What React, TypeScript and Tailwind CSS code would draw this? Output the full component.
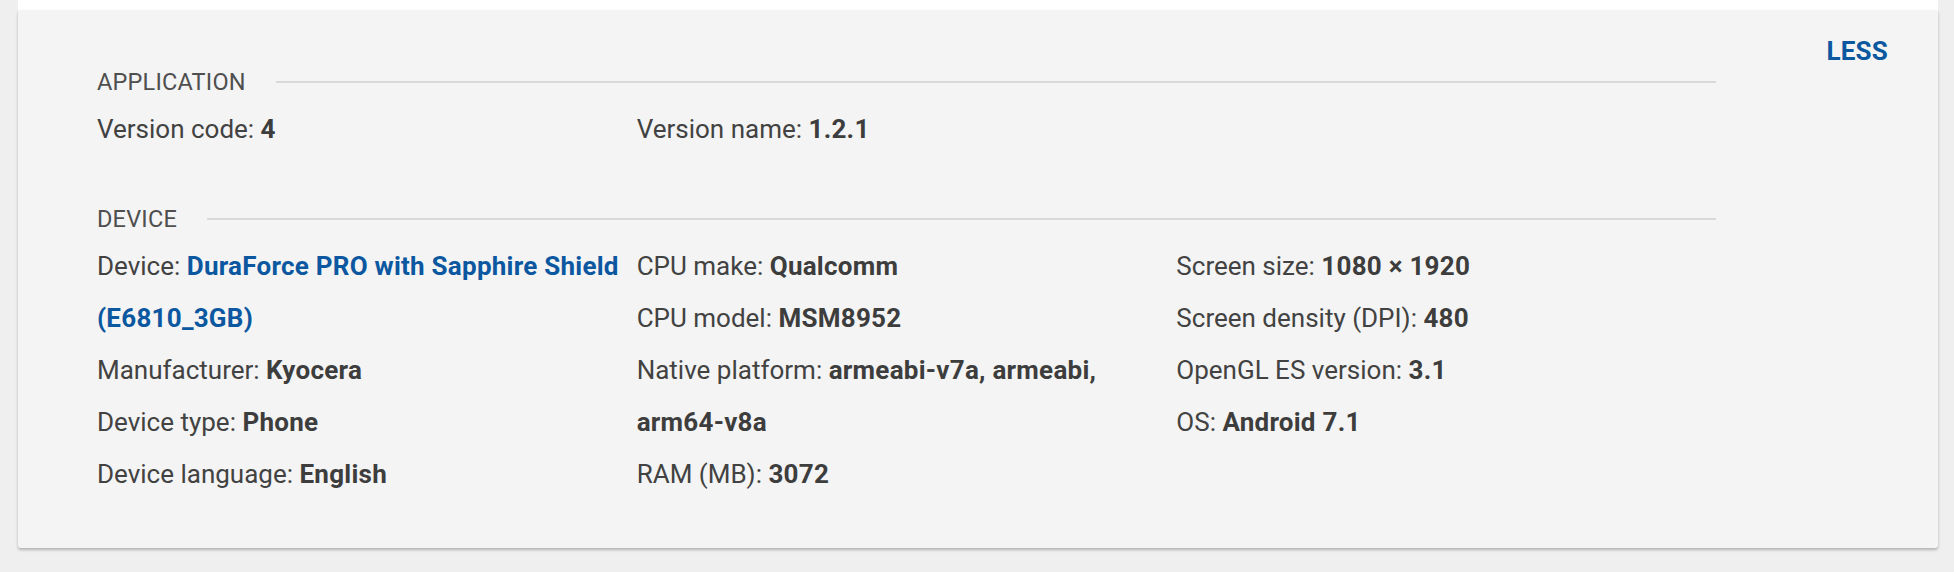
import React from 'react';

type Field = { label: string; value: string; link?: boolean };

const appColumns: Field[][] = [
  [{ label: 'Version code', value: '4' }],
  [{ label: 'Version name', value: '1.2.1' }],
  [],
];

const deviceColumns: Field[][] = [
  [
    { label: 'Device', value: 'DuraForce PRO with Sapphire Shield (E6810_3GB)', link: true },
    { label: 'Manufacturer', value: 'Kyocera' },
    { label: 'Device type', value: 'Phone' },
    { label: 'Device language', value: 'English' },
  ],
  [
    { label: 'CPU make', value: 'Qualcomm' },
    { label: 'CPU model', value: 'MSM8952' },
    { label: 'Native platform', value: 'armeabi-v7a, armeabi, arm64-v8a' },
    { label: 'RAM (MB)', value: '3072' },
  ],
  [
    { label: 'Screen size', value: '1080 × 1920' },
    { label: 'Screen density (DPI)', value: '480' },
    { label: 'OpenGL ES version', value: '3.1' },
    { label: 'OS', value: 'Android 7.1' },
  ],
];

function SectionHeader({ title }: { title: string }) {
  return (
    <div className="flex items-center h-8 mb-[5px]">
      <span className="text-[23.5px] text-[#4f4f4f] tracking-[0.2px] translate-y-[1px]">{title}</span>
      <div className="flex-1 h-[2px] bg-[#d9d9d9] ml-[30px]" />
    </div>
  );
}

function Row({ field }: { field: Field }) {
  return (
    <div className="text-[26px] leading-[52px] text-[#424242]">
      {field.label}:{' '}
      <span
        className={
          field.link
            ? 'font-bold tracking-[0.25px] text-[#0b57a0]'
            : 'font-bold tracking-[0.25px] text-[#3d3d3d]'
        }
      >
        {field.value}
      </span>
    </div>
  );
}

function Section({ title, columns }: { title: string; columns: Field[][] }) {
  return (
    <div>
      <SectionHeader title={title} />
      <div className="grid grid-cols-3">
        {columns.map((col, i) => (
          <div key={i} className="flex flex-col pr-4">
            {col.map((f) => (
              <Row key={f.label} field={f} />
            ))}
          </div>
        ))}
      </div>
    </div>
  );
}

export default function App() {
  return (
    <div className="min-h-screen bg-[#efefef] font-['Roboto',sans-serif]">
      <div className="ml-[18px] mr-[16px] bg-white h-[10px]" />
      <div className="ml-[18px] mr-[16px] bg-[#f4f4f4] rounded-b-[3px] shadow-[0_2px_3px_rgba(0,0,0,0.25)] flex">
        <div className="flex-1 pl-[79px] pt-[56px] pb-[48px] flex flex-col gap-[48px]">
          <Section title="APPLICATION" columns={appColumns} />
          <Section title="DEVICE" columns={deviceColumns} />
        </div>
        <div className="w-[222px] flex justify-end pr-[50px] pt-[22px]">
          <button className="h-9 text-[26px] font-bold text-[#0b57a0] tracking-[0.2px]">LESS</button>
        </div>
      </div>
    </div>
  );
}
